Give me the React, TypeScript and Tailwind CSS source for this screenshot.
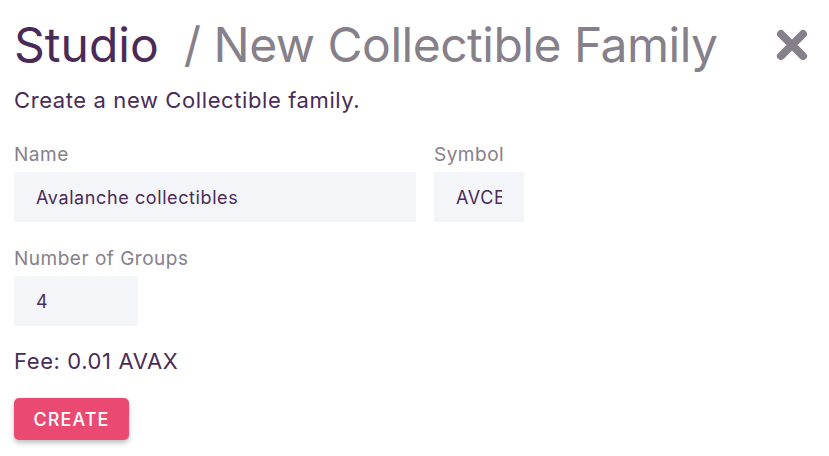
import React, { useState } from 'react';

const font = { fontFamily: 'Inter, "Noto Sans", sans-serif' };

const Field: React.FC<{ label: string; value: string; width: string }> = ({ label, value, width }) => (
  <div className="flex flex-col">
    <label className="text-[19px] leading-[24px] tracking-[0.5px] text-[#86808b]">{label}</label>
    <input
      readOnly
      value={value}
      className={`mt-[5px] h-[50px] ${width} bg-[#f4f5f9] px-[22px] text-[18px] tracking-[0.6px] text-[#4a2b57] outline-none`}
    />
  </div>
);

const App: React.FC = () => {
  const [open] = useState(true);
  if (!open) return null;

  return (
    <div className="min-h-screen bg-white pt-[17px] pl-[14px] pr-[21px]" style={font}>
      {/* Header */}
      <div className="flex h-[56px] items-center justify-between">
        <h1 className="text-[48px] leading-[56px] font-normal whitespace-nowrap">
          <span className="text-[#4a2b57]">Studio</span>
          <span className="ml-[25px] tracking-[-0.5px] text-[#86808b]">/ New Collectible Family</span>
        </h1>
        <button type="button" className="h-[32px] w-[32px] text-[#86808b]">
          <svg viewBox="0 0 32 32" width="32" height="32">
            <path d="M5 5 L27 27 M27 5 L5 27" stroke="currentColor" strokeWidth="8" strokeLinecap="round" />
          </svg>
        </button>
      </div>

      <p className="mt-[13px] text-[22px] leading-[28px] tracking-[0.6px] text-[#4a2b57]">
        Create a new Collectible family.
      </p>

      {/* Form */}
      <div className="mt-[29px] flex gap-[18px]">
        <Field label="Name" value="Avalanche collectibles" width="w-[402px]" />
        <Field label="Symbol" value="AVCE" width="w-[90px]" />
      </div>

      <div className="mt-[25px]">
        <Field label="Number of Groups" value="4" width="w-[124px]" />
      </div>

      <p className="mt-[21px] text-[22px] leading-[28px] tracking-[0.6px] text-[#4a2b57]">Fee: 0.01 AVAX</p>

      <button
        type="button"
        className="mt-[23px] h-[42px] w-[115px] rounded-[5px] bg-[#ea4a72] text-[18px] font-medium tracking-[0.06em] text-white shadow-[0_3px_5px_rgba(0,0,0,0.25)]"
      >
        CREATE
      </button>
    </div>
  );
};

export default App;
